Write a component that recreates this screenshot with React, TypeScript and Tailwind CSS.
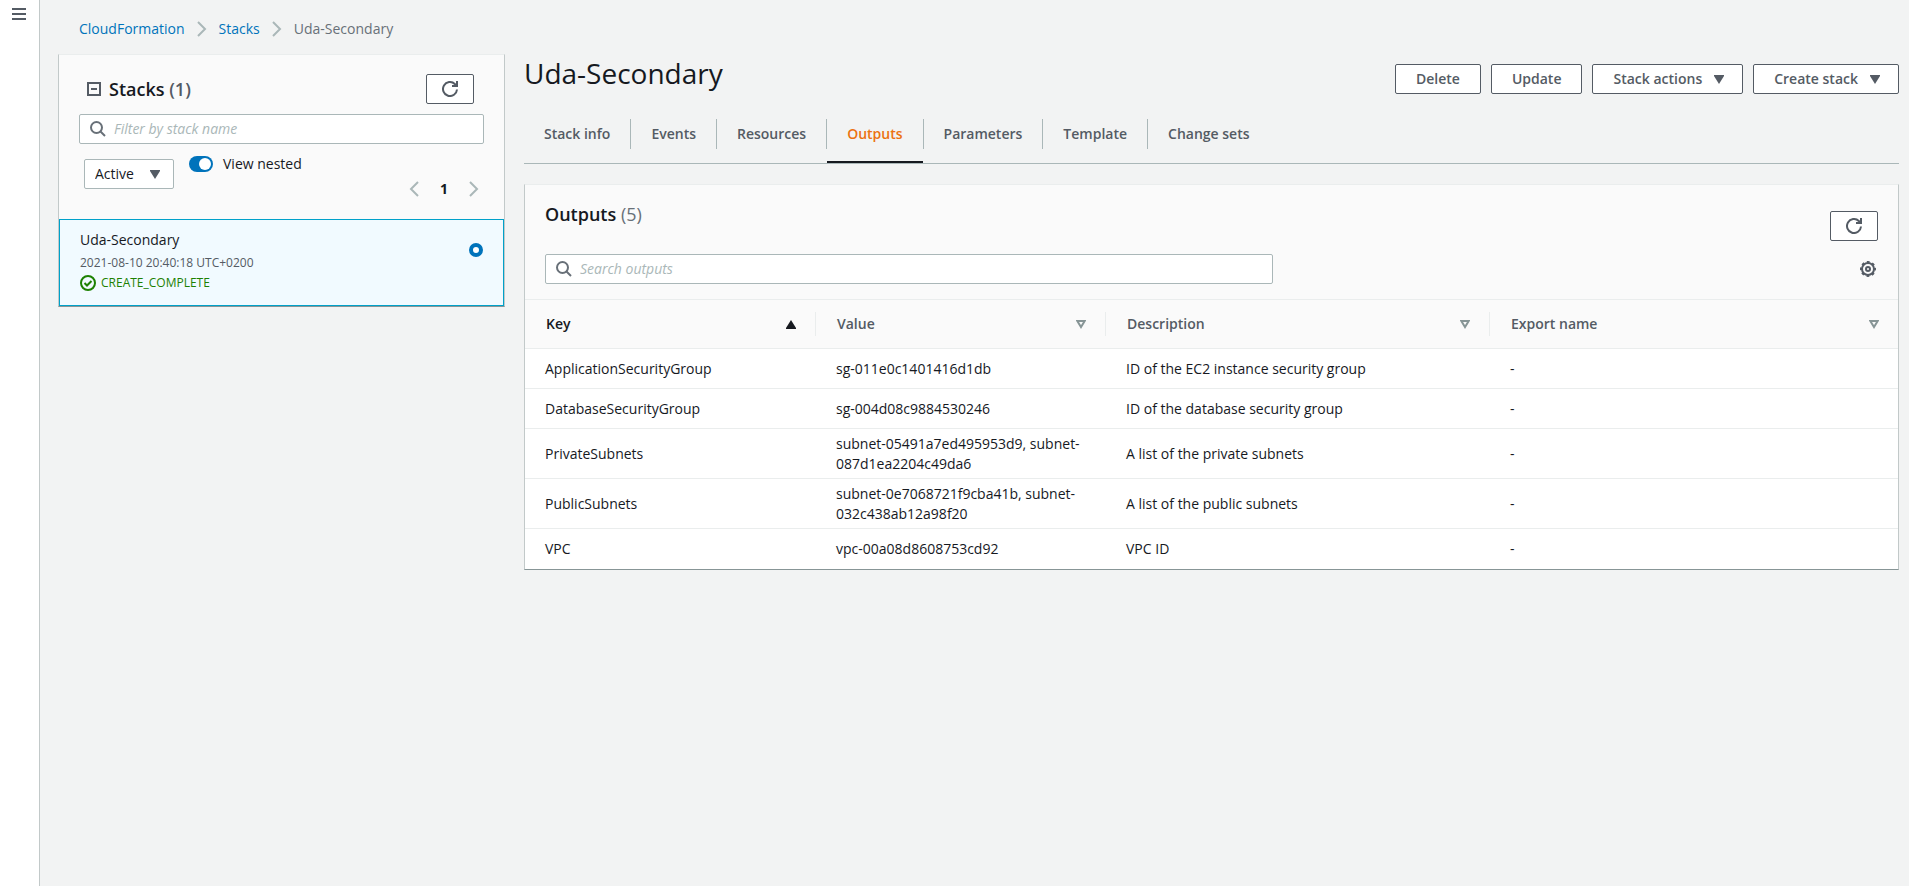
import React, { useState } from "react";

const tabs = ["Stack info", "Events", "Resources", "Outputs", "Parameters", "Template", "Change sets"];

const outputs = [
  { key: "ApplicationSecurityGroup", value: "sg-011e0c1401416d1db", description: "ID of the EC2 instance security group" },
  { key: "DatabaseSecurityGroup", value: "sg-004d08c9884530246", description: "ID of the database security group" },
  { key: "PrivateSubnets", value: "subnet-05491a7ed495953d9, subnet-087d1ea2204c49da6", description: "A list of the private subnets" },
  { key: "PublicSubnets", value: "subnet-0e7068721f9cba41b, subnet-032c438ab12a98f20", description: "A list of the public subnets" },
  { key: "VPC", value: "vpc-00a08d8608753cd92", description: "VPC ID" },
];

const columns = [
  { label: "Key", width: "w-[291px]" },
  { label: "Value", width: "w-[290px]" },
  { label: "Description", width: "w-[384px]" },
  { label: "Export name", width: "" },
];

function RefreshIcon() {
  return (
    <svg className="size-4" viewBox="0 0 16 16" fill="none" stroke="currentColor" strokeWidth="2" aria-hidden="true">
      <path d="M15 8.500a7 7 0 1 1-2.200-5.600L15 5" />
      <path d="M10 5h5V0" />
    </svg>
  );
}

function SearchIcon() {
  return (
    <svg className="size-4 shrink-0 text-[#687078]" viewBox="0 0 16 16" fill="none" stroke="currentColor" strokeWidth="2" aria-hidden="true">
      <circle cx="6.500" cy="6.500" r="5.500" />
      <path d="m10.500 10.500 4.500 4.500" />
    </svg>
  );
}

function GearIcon() {
  return (
    <svg className="size-4" viewBox="0 0 16 16" fill="none" stroke="currentColor" aria-hidden="true">
      <circle cx="8" cy="8" r="7" strokeWidth="2" strokeDasharray="2.750 2.748" strokeDashoffset="1.375" />
      <circle cx="8" cy="8" r="6" strokeWidth="2" />
      <circle cx="8" cy="8" r="2" strokeWidth="2" />
    </svg>
  );
}

function Chevron({ left = false }: { left?: boolean }) {
  return (
    <svg className="h-4 w-[10px] text-[#aab7b8]" viewBox="0 0 10 16" fill="none" stroke="currentColor" strokeWidth="2" aria-hidden="true">
      <path d={left ? "M9 1 2 8l7 7" : "m1 1 7 7-7 7"} />
    </svg>
  );
}

function CaretDown() {
  return (
    <svg className="h-[9px] w-[10px]" viewBox="0 0 10 9" fill="currentColor" aria-hidden="true">
      <path d="M0 0h10v1L5 9 0 1z" />
    </svg>
  );
}

function SortIcon({ active }: { active: boolean }) {
  return active ? (
    <svg className="h-[9px] w-[10px] text-[#16191f]" viewBox="0 0 10 9" fill="currentColor" aria-hidden="true">
      <path d="M0 9h10V8L5 0 0 8z" />
    </svg>
  ) : (
    <svg className="h-[9px] w-[10px] text-[#879596]" viewBox="0 0 10 9" fill="none" stroke="currentColor" strokeWidth="2" aria-hidden="true">
      <path d="M1.300 1h7.400L5 7z" />
    </svg>
  );
}

function ActionButton({ children, menu = false }: { children: React.ReactNode; menu?: boolean }) {
  return (
    <button
      type="button"
      className={
        "flex h-[30px] items-center gap-3 rounded-[2px] border border-[#545b64] bg-white font-semibold text-[#545b64] " +
        (menu ? "pr-[18px] pl-5" : "px-5")
      }
    >
      {children}
      {menu && <CaretDown />}
    </button>
  );
}

function RefreshButton({ label }: { label: string }) {
  return (
    <button
      type="button"
      aria-label={label}
      className="flex h-[30px] w-12 items-center justify-center rounded-[2px] border border-[#545b64] bg-white text-[#545b64]"
    >
      <RefreshIcon />
    </button>
  );
}

function SearchBox({ label, className }: { label: string; className: string }) {
  return (
    <label className={"flex h-[30px] items-center gap-2 rounded-[2px] border border-[#aab7b8] bg-white px-[10px] " + className}>
      <SearchIcon />
      <input
        type="text"
        aria-label={label}
        placeholder={label}
        className="min-w-0 flex-1 bg-transparent outline-none placeholder:text-[#aab7b8] placeholder:italic"
      />
    </label>
  );
}

function StacksPanel() {
  const [nested, setNested] = useState(true);
  return (
    <section className="border border-t-[#eaeded] border-r-[#c2c9c9] border-b-[#879596] border-l-[#c2c9c9] bg-[#fafafa]">
      <div className="px-5 pt-[19px] pb-5">
        <div className="flex items-center justify-between pr-[10px] pl-2">
          <h2 className="flex items-center gap-2 text-[18px] leading-[22px] font-semibold text-[#16191f]">
            <svg className="size-[14px] text-[#545b64]" viewBox="0 0 14 14" fill="none" stroke="currentColor" strokeWidth="2" aria-hidden="true">
              <path d="M1 1h12v12H1zM4 7h6" />
            </svg>
            <span>
              Stacks <span className="text-[#545b64]">(1)</span>
            </span>
          </h2>
          <RefreshButton label="Refresh stacks" />
        </div>
        <SearchBox label="Filter by stack name" className="mt-[10px]" />
        <div className="mt-[10px] flex items-start">
          <div className="mt-[5px] ml-[5px] grid w-[90px] items-center">
            <select
              aria-label="Stack status"
              className="col-start-1 row-start-1 h-[30px] appearance-none rounded-[2px] border border-[#aab7b8] bg-white pl-[10px] text-[#16191f]"
            >
              <option>Active</option>
            </select>
            <span className="pointer-events-none col-start-1 row-start-1 mr-[14px] justify-self-end text-[#545b64]">
              <CaretDown />
            </span>
          </div>
          <label className="ml-[15px] flex items-center gap-[10px] text-[#16191f]">
            <input
              type="checkbox"
              checked={nested}
              onChange={(e) => setNested(e.target.checked)}
              className="h-4 w-6 appearance-none rounded-full bg-[#879596] p-[2px] before:block before:size-3 before:rounded-full before:bg-white checked:bg-[#0073bb] checked:pl-[10px]"
            />
            View nested
          </label>
          <nav aria-label="Stack pages" className="mt-[25px] mr-[5px] ml-auto flex h-5 items-center gap-[21px]">
            <button type="button" aria-label="Previous page">
              <Chevron left />
            </button>
            <button type="button" className="font-bold text-[#16191f]">
              1
            </button>
            <button type="button" aria-label="Next page">
              <Chevron />
            </button>
          </nav>
        </div>
      </div>
      <label className="flex items-start justify-between border border-[#00a1c9] bg-[#f1faff] pt-[10px] pr-5 pb-3 pl-5">
        <span className="flex flex-col">
          <span className="leading-5 text-[#16191f]">Uda-Secondary</span>
          <span className="mt-[3px] text-xs leading-5 text-[#545b64]">2021-08-10 20:40:18 UTC+0200</span>
          <span className="flex items-center gap-[5px] text-xs leading-5 text-[#1d8102]">
            <svg className="size-4" viewBox="0 0 16 16" fill="none" stroke="currentColor" strokeWidth="2" aria-hidden="true">
              <circle cx="8" cy="8" r="7" />
              <path d="m4.500 8 2.500 2.500L11.500 6" />
            </svg>
            CREATE_COMPLETE
          </span>
        </span>
        <input
          type="radio"
          name="stack"
          aria-label="Select Uda-Secondary"
          defaultChecked
          className="mt-[13px] size-[14px] appearance-none rounded-full border-[4px] border-[#0073bb] bg-white"
        />
      </label>
    </section>
  );
}

function OutputsPanel() {
  return (
    <section className="border border-t-[#eaeded] border-r-[#c2c9c9] border-b-[#879596] border-l-[#c2c9c9] bg-[#fafafa]">
      <div className="px-5 pt-[18px] pb-[15px]">
        <div className="flex items-start justify-between">
          <h2 className="text-[18px] leading-[22px] font-semibold text-[#16191f]">
            Outputs <span className="font-normal text-[#687078]">(5)</span>
          </h2>
          <div className="mt-2">
            <RefreshButton label="Refresh outputs" />
          </div>
        </div>
        <div className="mt-[13px] flex items-center justify-between pr-[2px]">
          <SearchBox label="Search outputs" className="w-[728px]" />
          <button type="button" aria-label="Preferences" className="text-[#545b64]">
            <GearIcon />
          </button>
        </div>
      </div>
      <table className="w-full table-fixed border-collapse text-left">
        <thead>
          <tr className="h-[49px] border-y border-[#eaeded]">
            {columns.map((c, i) => (
              <th key={c.label} scope="col" className={"p-0 font-semibold " + c.width}>
                <div
                  className={
                    "flex h-6 items-center justify-between pl-[21px] " +
                    (i < columns.length - 1 ? "border-r border-[#eaeded] pr-[19px] " : "pr-[19px] ") +
                    (i === 0 ? "text-[#16191f]" : "text-[#545b64]")
                  }
                >
                  {c.label}
                  <SortIcon active={i === 0} />
                </div>
              </th>
            ))}
          </tr>
        </thead>
        <tbody className="bg-white text-[#16191f]">
          {outputs.map((o) => (
            <tr key={o.key} className="h-10 border-b border-[#eaeded] last:border-b-0">
              <td className="px-5 pt-[5px] pb-1">{o.key}</td>
              <td className="px-5 pt-[5px] pb-1">{o.value}</td>
              <td className="px-5 pt-[5px] pb-1">{o.description}</td>
              <td className="px-5 pt-[5px] pb-1">-</td>
            </tr>
          ))}
        </tbody>
      </table>
    </section>
  );
}

export default function App() {
  return (
    <div className="flex min-h-screen bg-[#f2f3f3] font-['Open_Sans','Noto_Sans',sans-serif] text-[14px] leading-5 text-[#16191f]">
      <aside className="w-10 shrink-0 border-r border-[#c2c9c9] bg-white pt-2 pl-3">
        <button type="button" aria-label="Open navigation" className="block text-[#545b64]">
          <svg className="h-3 w-[14px]" viewBox="0 0 14 12" fill="currentColor" aria-hidden="true">
            <path d="M0 0h14v2H0zM0 5h14v2H0zM0 10h14v2H0z" />
          </svg>
        </button>
      </aside>
      <div className="min-w-0 flex-1 pt-[19px] pr-[10px] pl-[18px]">
        <nav aria-label="Breadcrumb" className="flex items-center gap-3 pl-[21px] text-[#687078]">
          <a href="#cloudformation" className="text-[#0073bb]">
            CloudFormation
          </a>
          <Chevron />
          <a href="#stacks" className="text-[#0073bb]">
            Stacks
          </a>
          <Chevron />
          <span>Uda-Secondary</span>
        </nav>
        <div className="flex items-start gap-[19px]">
          <div className="mt-[15px] w-[447px] shrink-0">
            <StacksPanel />
          </div>
          <main className="min-w-0 flex-1">
            <div className="flex items-start justify-between pt-4">
              <h1 className="text-[28px] leading-9">Uda-Secondary</h1>
              <div className="mt-[9px] flex gap-[10px]">
                <ActionButton>Delete</ActionButton>
                <ActionButton>Update</ActionButton>
                <ActionButton menu>Stack actions</ActionButton>
                <ActionButton menu>Create stack</ActionButton>
              </div>
            </div>
            <div role="tablist" className="mt-[25px] flex border-b border-[#aab7b8]">
              {tabs.map((t, i) => (
                <div key={t} className="flex items-start">
                  <button
                    type="button"
                    role="tab"
                    aria-selected={t === "Outputs"}
                    className={
                      "h-11 border-b-2 px-5 pb-3 font-semibold " +
                      (t === "Outputs" ? "border-[#16191f] text-[#ec7211]" : "border-transparent text-[#545b64]")
                    }
                  >
                    {t}
                  </button>
                  {i < tabs.length - 1 && <span className="h-[30px] w-px bg-[#aab7b8]" />}
                </div>
              ))}
            </div>
            <div className="mt-5">
              <OutputsPanel />
            </div>
          </main>
        </div>
      </div>
    </div>
  );
}
